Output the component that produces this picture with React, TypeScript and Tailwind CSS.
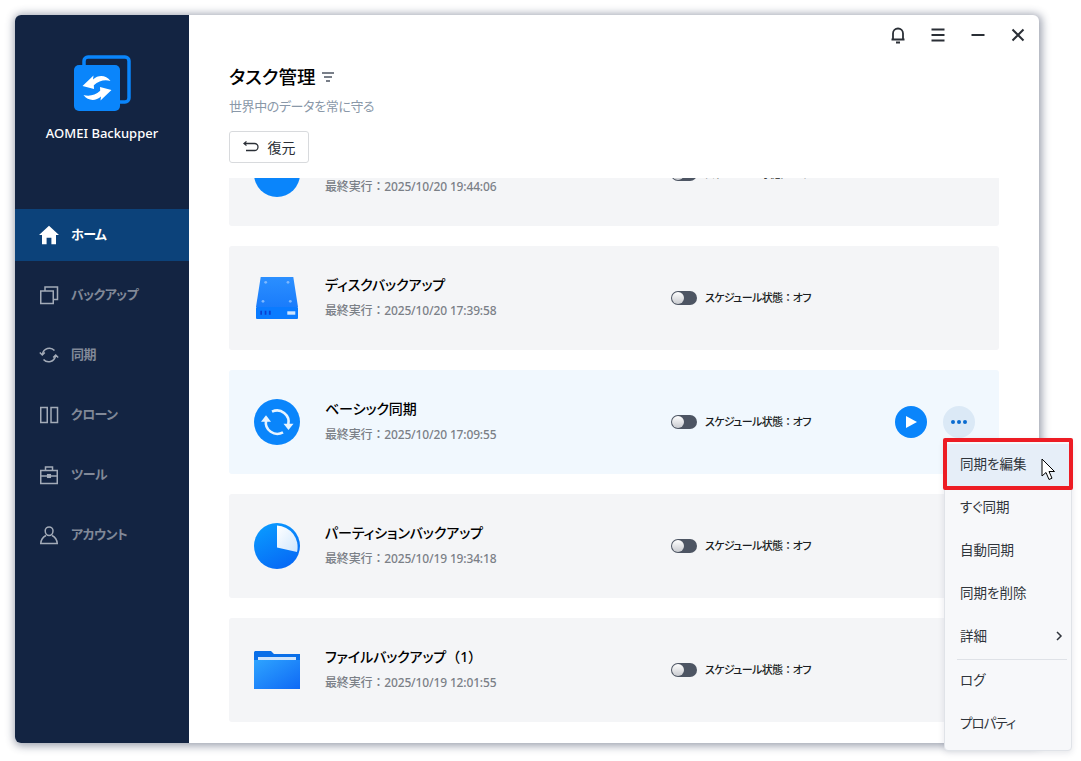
const navItems = [
    { label: "ホーム", icon: "home", active: true },
    { label: "バックアップ", icon: "backup", active: false },
    { label: "同期", icon: "sync", active: false },
    { label: "クローン", icon: "clone", active: false },
    { label: "ツール", icon: "tool", active: false },
    { label: "アカウント", icon: "user", active: false },
]

const tasks = [
    { title: "システムバックアップ", suffix: "", date: "2025/10/20 19:44:06", icon: "circle", hover: false },
    { title: "ディスクバックアップ", suffix: "", date: "2025/10/20 17:39:58", icon: "disk", hover: false },
    { title: "ベーシック同期", suffix: "", date: "2025/10/20 17:09:55", icon: "sync", hover: true },
    { title: "パーティションバックアップ", suffix: "", date: "2025/10/19 19:34:18", icon: "partition", hover: false },
    { title: "ファイルバックアップ", suffix: "（1）", date: "2025/10/19 12:01:55", icon: "folder", hover: false },
]

const menuTop = ["同期を編集", "すぐ同期", "自動同期", "同期を削除", "詳細"]
const menuBottom = ["ログ", "プロパティ"]

function NavIcon({ name, active }: { name: string; active: boolean }) {
    const color = active ? "#ffffff" : "#a3abb8"
    if (name === "home") {
        return (
            <svg width="20" height="20" viewBox="0 0 20 20">
                <path d="M10 .8 20 10h-3v9.200h-4.600v-6.400H7.600v6.400H3V10H0z" fill={color} />
            </svg>
        )
    }
    return (
        <svg width="20" height="20" viewBox="0 0 20 20" fill="none" stroke={color} strokeWidth="1.500">
            {name === "backup" && (
                <>
                    <rect x="1.750" y="6" width="12.500" height="12.500" />
                    <path d="M6 6V2h12.500v12.500h-4" />
                </>
            )}
            {name === "sync" && (
                <>
                    <path d="M3.500 9A7 7 0 0 1 15.500 5.500" />
                    <path d="M16.500 11A7 7 0 0 1 4.500 14.500" />
                    <path d="m.8 7.500 2.500 2.500 2.500-2.500M14.200 12.500l2.500-2.500 2.500 2.500" />
                </>
            )}
            {name === "clone" && (
                <>
                    <rect x="1.750" y="2.500" width="6.500" height="15" />
                    <rect x="12" y="2.500" width="6.500" height="15" />
                </>
            )}
            {name === "tool" && (
                <>
                    <rect x="1.750" y="5.500" width="16.500" height="13" />
                    <path d="M6.500 5.500V2h7v3.500M1.750 11h16.500" />
                    <rect x="8.700" y="9.700" width="2.600" height="2.600" fill={color} />
                </>
            )}
            {name === "user" && (
                <>
                    <path d="M6.200 5.800a3.900 3.900 0 0 1 7.800 0c0 2.700-1.800 4.700-3.900 4.700S6.200 8.500 6.200 5.800z" />
                    <path d="M7 10.500C4 12 2 14.500 1.750 18.500h16.500C18 14.500 16 12 13 10.500" />
                </>
            )}
        </svg>
    )
}

function TaskIcon({ name }: { name: string }) {
    if (name === "disk") {
        return (
            <svg width="46" height="46" viewBox="0 0 46 46">
                <defs>
                    <linearGradient id="diskTop" x1="0" y1="0" x2="0" y2="1">
                        <stop offset="0" stopColor="#2b8fff" />
                        <stop offset="1" stopColor="#1a7cfb" />
                    </linearGradient>
                </defs>
                <path d="M6.700 2h32.600L44 32H2z" fill="url(#diskTop)" />
                <rect x="2" y="32" width="42" height="12" rx="1" fill="#0a7bff" />
                <circle cx="11.700" cy="7.300" r="1.400" fill="#7db8ff" />
                <circle cx="34" cy="7.300" r="1.400" fill="#7db8ff" />
                <circle cx="9" cy="26.300" r="1.400" fill="#7db8ff" />
                <circle cx="36.300" cy="26.300" r="1.400" fill="#7db8ff" />
                <path d="M6.300 35.700H8v4H6.300zM10.700 35.700h1.700v4h-1.700zM14.900 35.700h1.800v4h-1.800z" fill="#0b3fd0" />
                <rect x="33.300" y="36.300" width="8" height="3.400" fill="#cfe6ff" />
            </svg>
        )
    }
    if (name === "partition") {
        return (
            <svg width="46" height="46" viewBox="0 0 46 46">
                <defs>
                    <linearGradient id="partBlue" x1="0.200" y1="0" x2="0.700" y2="1">
                        <stop offset="0" stopColor="#0a9bff" />
                        <stop offset="1" stopColor="#0668f5" />
                    </linearGradient>
                    <linearGradient id="partLight" x1="0" y1="0" x2="1" y2="1">
                        <stop offset="0" stopColor="#ffffff" />
                        <stop offset="1" stopColor="#cfe6fd" />
                    </linearGradient>
                </defs>
                <circle cx="23" cy="23" r="23" fill="url(#partBlue)" />
                <path d="M23 2.500A21.500 21.500 0 0 1 43 29L23 24.500z" fill="url(#partLight)" />
            </svg>
        )
    }
    if (name === "folder") {
        return (
            <svg width="46" height="46" viewBox="0 0 46 46">
                <defs>
                    <linearGradient id="folderBody" x1="0" y1="0" x2="1" y2="1">
                        <stop offset="0" stopColor="#2ea4ff" />
                        <stop offset="1" stopColor="#0f69f5" />
                    </linearGradient>
                </defs>
                <path d="M0 5.500C0 4.700.8 4 1.500 4H17l3 3h26v8H0z" fill="#0a6fe8" />
                <rect x="4" y="10" width="38" height="3" fill="#cfe4fb" />
                <rect x="0" y="13" width="46" height="29" fill="url(#folderBody)" />
            </svg>
        )
    }
    return (
        <svg width="46" height="46" viewBox="0 0 46 46">
            <circle cx="23" cy="23" r="23" fill="#0a85fb" />
            {name === "sync" && (
                <g fill="none" stroke="#e8f4ff" strokeWidth="2.600">
                    <path d="M18 12.700A11.500 11.500 0 0 1 34.300 25.500" />
                    <path d="M12 21.500A11.500 11.500 0 0 0 29 33.400" />
                    <path d="M7 22.800h10L12 16.300z" fill="#e8f4ff" stroke="none" />
                    <path d="M29.500 24.700h10l-5 6.200z" fill="#e8f4ff" stroke="none" />
                </g>
            )}
        </svg>
    )
}

function TaskCard({ title, suffix, date, icon, hover }: { title: string; suffix: string; date: string; icon: string; hover: boolean }) {
    return (
        <div className={`flex h-[104px] w-[770px] shrink-0 items-center rounded-[3px] pl-[25px] pr-6 ${hover ? "bg-[#f1f8fe]" : "bg-[#f4f5f7]"}`}>
            <TaskIcon name={icon} />
            <div className="ml-[25px] flex w-[346px] flex-col gap-[6px]">
                <div className="h-5 text-[14px] leading-5 font-medium tracking-[-0.1px] text-black">
                    {title}
                    {suffix && <span className="[font-feature-settings:normal]">{suffix}</span>}
                </div>
                <div className="h-5 text-[12px] leading-5 font-medium tracking-[-0.15px] text-[#7b8087] [font-feature-settings:normal]">最終実行：{date}</div>
            </div>
            <div className="flex items-center gap-2">
                <div className="flex h-[14px] w-[26px] items-center rounded-full bg-[#4d5563] pl-[1px]">
                    <div className="h-3 w-3 rounded-full bg-gradient-to-b from-white to-[#c9cbd0]" />
                </div>
                <div className="text-[11px] font-medium tracking-[-0.65px] text-[#1a1d22]">
                    スケジュール状態<span className="[font-feature-settings:normal]">：</span>オフ
                </div>
            </div>
            {hover && (
                <div className="ml-auto flex items-center gap-4">
                    <div className="flex h-8 w-8 items-center justify-center rounded-full bg-[#0a85fb]">
                        <svg width="14" height="14" viewBox="0 0 14 14">
                            <path d="M2 1v12l11-6z" fill="#ffffff" />
                        </svg>
                    </div>
                    <div className="flex h-8 w-8 items-center justify-center gap-[2px] rounded-full bg-[#dbe9f6]">
                        <div className="h-1 w-1 rounded-full bg-[#0a6cd0]" />
                        <div className="h-1 w-1 rounded-full bg-[#0a6cd0]" />
                        <div className="h-1 w-1 rounded-full bg-[#0a6cd0]" />
                    </div>
                </div>
            )}
        </div>
    )
}

export default function App() {
    return (
        <div className="relative h-[761px] w-[1081px] overflow-hidden bg-white p-[15px] pb-[18px] font-['Noto_Sans','Noto_Sans_CJK_JP',sans-serif] [font-feature-settings:'palt']">
            <div className="flex h-[728px] w-[1024px] overflow-hidden rounded-md bg-white shadow-[1px_1px_8px_2px_rgba(40,50,80,0.45)]">
                <aside className="flex w-[174px] shrink-0 flex-col bg-[#132442]">
                    <div className="flex h-[194px] flex-col items-center pt-[40px]">
                        <svg width="58" height="57" viewBox="0 0 58 57">
                            <path d="M11 12V6a4 4 0 0 1 4-4h37a4 4 0 0 1 4 4v37a4 4 0 0 1-4 4h-6" fill="none" stroke="#0a85fb" strokeWidth="3.500" />
                            <rect x="1" y="10" width="46" height="46" rx="5" fill="#0a85fb" />
                            <path d="M20.500 20.500 9.500 31 21 34l-.2-3.800C26 25.500 32 24.500 37.500 26 33 20 25.500 19.500 20 24.500z" fill="#ffffff" />
                            <path d="M20.500 20.500 9.500 31 21 34l-.2-3.800C26 25.500 32 24.500 37.500 26 33 20 25.500 19.500 20 24.500z" fill="#ffffff" transform="rotate(180 24 33)" />
                        </svg>
                        <div className="mt-[12px] text-[13px] font-medium text-white">AOMEI Backupper</div>
                    </div>
                    <nav className="flex flex-col gap-2">
                        {navItems.map((item) => (
                            <div
                                key={item.label}
                                className={`flex h-[52px] items-center gap-3 pl-6 ${item.active ? "bg-[#0c427a] text-white" : "text-[#818998]"}`}
                            >
                                <NavIcon name={item.icon} active={item.active} />
                                <span className="pb-[1px] text-[13px] font-bold tracking-[-0.6px]">{item.label}</span>
                            </div>
                        ))}
                    </nav>
                </aside>
                <main className="flex min-w-0 flex-1 flex-col">
                    <div className="flex h-[38px] shrink-0 items-center justify-end gap-5 pr-[11px] pt-[1px]">
                        <svg width="20" height="20" viewBox="0 0 20 20" fill="none" stroke="#2a2f36" strokeWidth="1.800">
                            <path d="M3.500 14.500h13M5 14.500V8.500a5 5 0 0 1 10 0v6" />
                            <path d="M8 17.500h4" />
                        </svg>
                        <svg width="20" height="20" viewBox="0 0 20 20" stroke="#2a2f36" strokeWidth="1.800">
                            <path d="M3.500 4.500h13M3.500 10h13M3.500 15.500h13" />
                        </svg>
                        <svg width="20" height="20" viewBox="0 0 20 20" stroke="#2a2f36" strokeWidth="1.800">
                            <path d="M3.500 10h13" />
                        </svg>
                        <svg width="20" height="20" viewBox="0 0 20 20" stroke="#2a2f36" strokeWidth="2">
                            <path d="m4.500 4.500 11 11M15.500 4.500l-11 11" />
                        </svg>
                    </div>
                    <div className="shrink-0 pl-10">
                        <div className="mt-[10px] flex h-7 items-center gap-[6px]">
                            <h1 className="text-[18.5px] font-medium text-black">タスク管理</h1>
                            <svg width="14" height="12" viewBox="0 0 14 12" stroke="#4d5563" strokeWidth="1.300">
                                <path d="M1 2h12M3 6h8M5 10h4" />
                            </svg>
                        </div>
                        <div className="mt-[5px] h-5 text-[13px] leading-5 tracking-[-0.4px] text-[#8a98a8]">世界中のデータを常に守る</div>
                        <button className="mt-[15px] flex h-8 w-20 items-center justify-center gap-[9px] rounded-[3px] border border-[#d8dadd] bg-white text-[14px] text-[#2a2f36]">
                            <svg width="16" height="12" viewBox="0 0 16 12" fill="none" stroke="#2a2f36" strokeWidth="1.300">
                                <path d="M2 2.500h9.500a3.500 3.500 0 0 1 0 7H3" />
                                <path d="M3.500.5 1 2.500l2.500 2" />
                            </svg>
                            復元
                        </button>
                    </div>
                    <div className="mt-[15px] min-h-0 flex-1 overflow-hidden pl-10">
                        <div className="mt-[-56px] flex flex-col gap-5">
                            {tasks.map((task) => (
                                <TaskCard key={task.date} {...task} />
                            ))}
                        </div>
                    </div>
                </main>
            </div>

            <div className="absolute left-[944px] top-[439px] w-[128px] rounded-[4px] border border-[#e0e3e8] bg-[#f7f8fa] py-1 text-[13.5px] text-[#2f343b] shadow-[0_2px_6px_rgba(40,50,80,0.12)]">
                {menuTop.map((item, i) => (
                    <div key={item} className={`flex h-[43px] items-center justify-between pb-[3px] pl-[15px] pr-2 ${i === 0 ? "bg-[#e6eef8]" : ""}`}>
                        {item}
                        {item === "詳細" && (
                            <svg width="8" height="10" viewBox="0 0 8 10" fill="none" stroke="#2f343b" strokeWidth="1.500">
                                <path d="m2 1 4 4-4 4" />
                            </svg>
                        )}
                    </div>
                ))}
                <div className="ml-3 mr-1 h-px bg-[#dfe2e7]" />
                {menuBottom.map((item) => (
                    <div key={item} className={`flex h-[43px] items-center pb-[3px] pl-[15px] ${item === "プロパティ" ? "tracking-[-1px]" : ""}`}>
                        {item}
                    </div>
                ))}
            </div>
            <div className="absolute left-[943px] top-[438px] h-[52px] w-[130px] rounded-[2px] border-[4px] border-[#ed1c24]" />
            <svg className="absolute left-[1041px] top-[458px]" width="15" height="23" viewBox="0 0 15 23">
                <path d="M1 1v17l4-3.500 3 7 3-1.300-3-6.700h5.500z" fill="#ffffff" stroke="#000000" strokeWidth="1" />
            </svg>
        </div>
    )
}
